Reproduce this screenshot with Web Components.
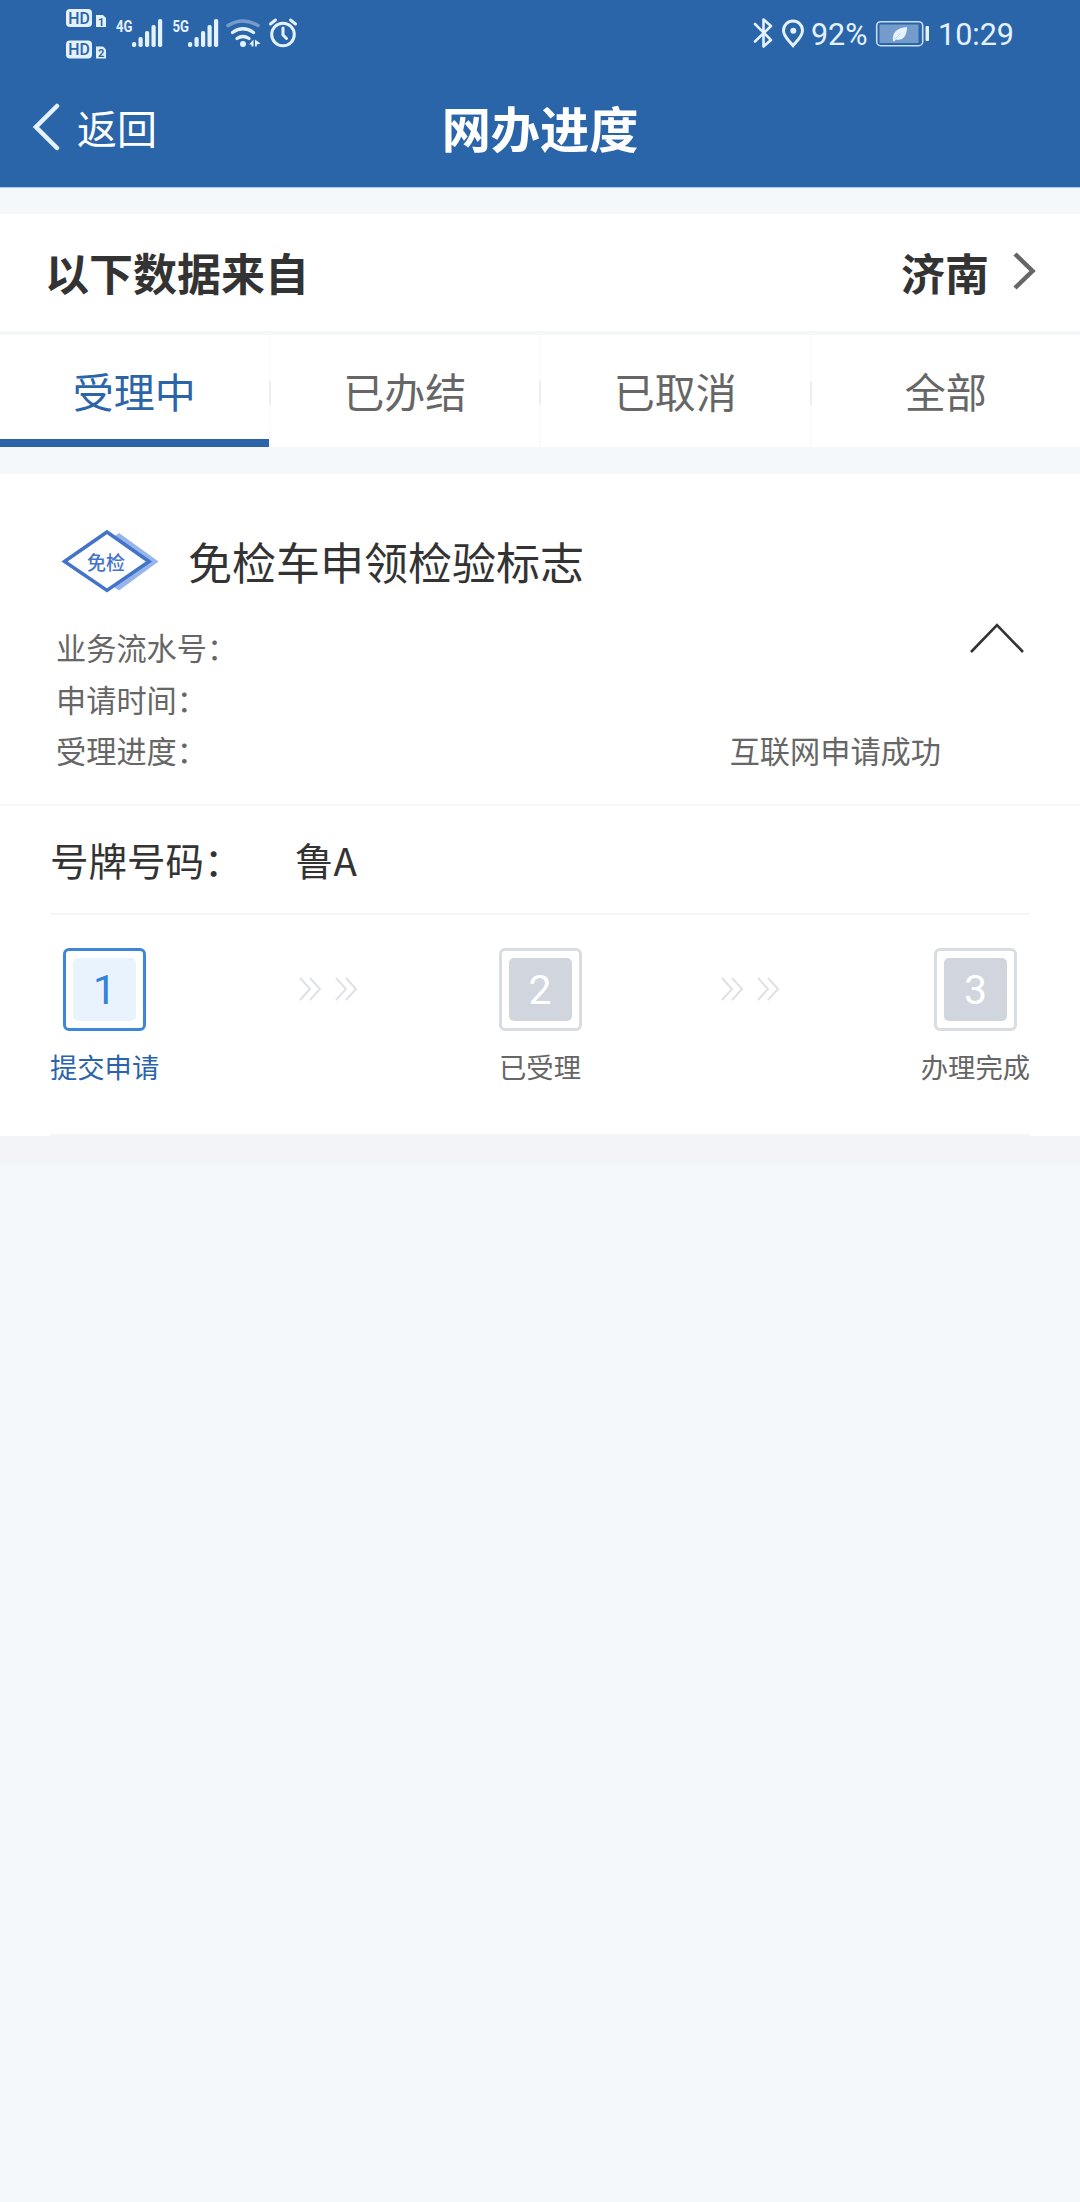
<!DOCTYPE html>
<html lang="zh-CN">
<head>
<meta charset="utf-8">
<title>网办进度</title>
<style>
	body {
		background: #f4f8fa;
		color: #333;
		font-family: "Noto Sans CJK SC", sans-serif;
		margin: 0;
	}
</style>
</head>
<body>
<progress-app></progress-app>
<script>
class BaseElement extends HTMLElement {
	constructor() {
		super();
		this.attachShadow({ mode: 'open' });
	}

	connectedCallback() {
		this.shadowRoot.innerHTML = `<style>${this.styles()}</style>${this.render()}`;
	}

	styles() { return ''; }
	render() { return '<slot></slot>'; }
}

// System status bar, icons on the left and right.

customElements.define('status-bar', class extends BaseElement {
	styles() {
		return `
			:host {
				color: #e4f1ff;
				display: flex;
				font: 32px/36px Roboto, sans-serif;
				height: 69px;
				justify-content: space-between;
				padding: 0 60px 0 65px;
			}
			div { display: flex; }
			.right { align-items: center; }
			svg { display: block; fill: none; stroke: currentColor; }
			text {
				fill: currentColor;
				font-family: Roboto, sans-serif;
				font-weight: 700;
				stroke: none;
			}
			.cut { fill: #2b65a9; }
			.solid { fill: currentColor; stroke: none; }
		`;
	}

	signal(x) {
		return [0, 1, 2, 3, 4].map((i) => {
			const h = [5, 10, 16, 22, 28][i];
			return `<rect class="solid" x="${x + i * 6.5}" y="${47 - h}" width="4.2" height="${h}" rx="1.8"/>`;
		}).join('');
	}

	hd(y, n) {
		return `
			<rect class="solid" x="66" y="${y}" width="26" height="18" rx="4"/>
			<text class="cut" x="68.2" y="${y + 14.6}" font-size="16" textLength="21.5" lengthAdjust="spacingAndGlyphs" style="font-weight:500">HD</text>
			<path class="solid" d="M96 ${y + 6}h7l3 3v9h-10z"/>
			<text class="cut" x="98" y="${y + 16.5}" font-size="11">${n}</text>
		`;
	}

	render() {
		return `
			<div>
				<svg width="235" height="69" viewBox="65 0 235 69">
					${this.hd(9, 1)}
					${this.hd(40.5, 2)}
					<text x="116" y="31.5" font-size="17" textLength="16.500" lengthAdjust="spacingAndGlyphs">4G</text>
					${this.signal(132)}
					<text x="172.500" y="31.5" font-size="17" textLength="16.500" lengthAdjust="spacingAndGlyphs">5G</text>
					${this.signal(188)}
					<path d="M228 25.500q15-9 30 0" stroke-width="3.500" stroke-linecap="round" opacity="0.4"/>
					<path d="M232.500 32.500q10.500-7.500 21 0M237 38.500q6-4 12 0" stroke-width="3.300" stroke-linecap="round"/>
					<circle class="solid" cx="243" cy="44" r="3"/>
					<path class="solid" d="M249 44.500l4.500-5v7h-2v-2zM255 39.500v7h1.800v-2l3.700-1z"/>
					<circle cx="283" cy="34.500" r="11.300" stroke-width="3"/>
					<path d="M283 28v7l3.500 3.500M270.500 24l5-4M295.500 24l-5-4" stroke-width="3" stroke-linecap="round"/>
				</svg>
			</div>
			<div class="right">
				<svg width="61" height="69" viewBox="750 0 61 69">
					<path d="M755 24l16 16-7.500 6.500v-27l7.500 6.500-16 15.500" stroke-width="2.600" stroke-linejoin="round" stroke-linecap="round"/>
					<path d="M793 45.500c-3-4-9.500-8.500-9.500-15a9.500 9.500 0 0 1 19 0c0 6.500-6.500 11-9.500 15z" stroke-width="3"/>
					<circle class="solid" cx="793.300" cy="30.700" r="3"/>
				</svg>
				<svg width="209" height="69" viewBox="811 0 209 69">
					<text x="811" y="45" font-size="32" textLength="56.500" lengthAdjust="spacingAndGlyphs" style="font-weight:400">92%</text>
					<rect x="876.700" y="21.700" width="46" height="24" rx="4" stroke-width="1.600" opacity="0.85"/>
					<rect class="solid" x="879.500" y="24.500" width="39" height="18.500" opacity="0.4"/>
					<rect class="solid" x="925.500" y="26" width="3.500" height="15" rx="1"/>
					<path class="solid" d="M893 41c-1-9 4-13 14-14 0 9-4 14-11 12.500l-2 2z"/>
					<path d="M895 39l6-6" style="stroke:#c3d6ec"/>
					<text x="938" y="45" font-size="32" textLength="76" lengthAdjust="spacingAndGlyphs" style="font-weight:400">10:29</text>
				</svg>
			</div>
		`;
	}
});

customElements.define('nav-bar', class extends BaseElement {
	styles() {
		return `
			:host {
				align-items: center;
				color: #fff;
				display: grid;
				grid-template-columns: 1fr auto 1fr;
				height: 115px;
				padding: 0 33px;
			}
			.back {
				align-items: center;
				display: flex;
				font-size: 40px;
				gap: 17px;
				line-height: 40px;
			}
			svg { display: block; fill: none; stroke: #e4f1ff; stroke-width: 4.500; }
			h1 {
				font-size: 49.200px;
				font-weight: 700;
				line-height: 114px;
				margin: 0;
			}
		`;
	}

	render() {
		return `
			<div class="back">
				<svg width="27" height="48" viewBox="0 0 27 48"><path d="M24 3L3 24l21 21" stroke-linecap="round"/></svg>
				<span>${this.getAttribute('back')}</span>
			</div>
			<h1><slot></slot></h1>
		`;
	}
});

customElements.define('source-row', class extends BaseElement {
	styles() {
		return `
			:host {
				align-items: center;
				background: #fff;
				border-bottom: 4px solid #f2f7f8;
				display: flex;
				font-size: 44px;
				font-weight: 700;
				height: 117px;
				justify-content: space-between;
				line-height: 117px;
				padding: 0 44px 0 45px;
			}
			div { align-items: center; display: flex; gap: 23px; }
			svg {
				display: block;
				fill: none;
				margin-bottom: 3px;
				stroke: #666;
				stroke-width: 4.5;
			}
		`;
	}

	render() {
		return `
			<slot></slot>
			<div>
				<span>${this.getAttribute('city')}</span>
				<svg width="24" height="40" viewBox="0 0 24 40"><path d="M3 3l17.500 17L3 37"/></svg>
			</div>
		`;
	}
});

customElements.define('tab-item', class extends BaseElement {
	styles() {
		return `
			:host {
				align-items: center;
				background: #fff;
				border-bottom: 8px solid #fff;
				color: #666;
				display: flex;
				flex: 1;
				font-size: 41px;
				height: 104px;
				line-height: 60px;
				margin-right: 2px;
			}
			:host([active]) { border-color: #2c64aa; color: #2c64aa; }
			:host(:last-child) { margin-right: 0; }
			span { flex: 1; padding-top: 6px; text-align: center; }
		`;
	}

	render() { return '<span><slot></slot></span>'; }
});

customElements.define('tab-bar', class extends BaseElement {
	styles() {
		return `
			:host {
				background: linear-gradient(#eceeef, #eceeef) 0 46px / 100% 24px no-repeat #f9fbfc;
				display: flex;
			}
		`;
	}
});

customElements.define('business-head', class extends BaseElement {
	styles() {
		return `
			:host {
				border-bottom: 2px solid #f7f8f9;
				box-sizing: border-box;
				display: block;
				height: 332px;
				padding: 0 55px 0 56px;
			}
			header {
				align-items: center;
				display: flex;
				gap: 29px;
				padding: 54px 0 0 5px;
			}
			h2 {
				font-size: 44px;
				font-weight: 400;
				line-height: 66px;
				margin: 0;
			}
			svg { display: block; fill: none; }
			text {
				fill: #4474c8;
				font-size: 19px;
				font-weight: 500;
			}
			.info { display: flex; justify-content: space-between; }
			dl {
				color: #666;
				display: grid;
				flex: 1;
				font-size: 30.200px;
				grid-auto-rows: 51.500px;
				grid-template-columns: 1fr auto;
				line-height: 51.500px;
				margin: 28px 0 0;
			}
			dt, dd { margin: 0; }
			.caret { margin: 28px 0 0 28px; }
		`;
	}

	render() {
		return `
			<header>
				<svg width="98" height="66" viewBox="61 528 98 66">
					<path d="M112 538l7-5L158.500 561.500 119 590.500l-7-5z" fill="#96b5ea"/>
					<path d="M124 543l28 18.500-28 19z" fill="#6c95dc"/>
					<path d="M64.500 561.500L107 532l42 29.500-42 29z" fill="#fff" stroke="#4474c8" stroke-width="3.500"/>
					<text x="87" y="569.500">免检</text>
				</svg>
				<h2>${this.getAttribute('heading')}</h2>
			</header>
			<div class="info">
				<dl>
					<dt>业务流水号：</dt><dd></dd>
					<dt>申请时间：</dt><dd></dd>
					<dt>受理进度：</dt><dd>${this.getAttribute('state')}</dd>
				</dl>
				<svg class="caret" width="56" height="32" viewBox="0 0 56 32"><path d="M2 30L28 3l26 27" stroke="#333" stroke-width="2.600"/></svg>
			</div>
		`;
	}
});

customElements.define('plate-row', class extends BaseElement {
	styles() {
		return `
			:host {
				border-bottom: 2px solid #f4f5f6;
				display: flex;
				font-size: 38.500px;
				height: 107px;
				line-height: 107px;
				margin: 0 50px;
			}
			span { width: 245px; }
		`;
	}

	render() { return `<span>${this.getAttribute('label')}</span><slot></slot>`; }
});

customElements.define('step-item', class extends BaseElement {
	styles() {
		return `
			:host {
				align-items: center;
				color: #666;
				display: flex;
				flex-direction: column;
				font-size: 27.300px;
				line-height: 40px;
			}
			.box {
				border: 3px solid #d9dce1;
				border-radius: 6px;
				box-sizing: border-box;
				height: 83px;
				margin-bottom: 15px;
				padding: 7px;
				width: 83px;
			}
			.num {
				background: #d1d5dd;
				border-radius: 5px;
				color: #fff;
				font: 41px/65px Roboto, sans-serif;
				height: 63px;
				text-align: center;
			}
			:host([active]) { color: #2c64aa; }
			:host([active]) .box { border-color: #3d86d8; }
			:host([active]) .num { background: #e9f3fd; color: #3482d9; }
		`;
	}

	render() {
		return `
			<div class="box"><div class="num">${this.getAttribute('num')}</div></div>
			<slot></slot>
		`;
	}
});

customElements.define('step-arrows', class extends BaseElement {
	styles() {
		return `
			:host { display: block; padding-top: 29px; }
			svg { display: block; fill: none; stroke: #dfe1e4; stroke-width: 2; }
		`;
	}

	render() {
		return `
			<svg width="60" height="24" viewBox="0 0 60 24">
				<path d="M1 1l10 11L1 23M11 1l10 11-10 11M37 1l10 11-10 11M47 1l10 11-10 11"/>
			</svg>
		`;
	}
});

customElements.define('step-list', class extends BaseElement {
	styles() {
		return `
			:host {
				align-items: flex-start;
				border-bottom: 2px solid #f4f5f8;
				display: flex;
				height: 186px;
				justify-content: space-between;
				margin: 0 50px;
				padding-top: 33px;
			}
		`;
	}
});

customElements.define('progress-app', class extends BaseElement {
	styles() {
		return `
			:host { display: block; min-height: 2202px; }
			.top {
				background: #2b65a9;
				border-bottom: 1px solid #a9c9e8;
				box-sizing: border-box;
				height: 188px;
				margin-bottom: 26px;
			}
			.card {
				background: #fff;
				box-shadow: 0 28px #f3f4f8;
				margin-top: 27px;
			}
		`;
	}

	render() {
		return `
			<div class="top">
				<status-bar></status-bar>
				<nav-bar back="返回">网办进度</nav-bar>
			</div>
			<source-row city="济南">以下数据来自</source-row>
			<tab-bar>
				<tab-item active>受理中</tab-item>
				<tab-item>已办结</tab-item>
				<tab-item>已取消</tab-item>
				<tab-item>全部</tab-item>
			</tab-bar>
			<div class="card">
				<business-head heading="免检车申领检验标志" state="互联网申请成功"></business-head>
				<plate-row label="号牌号码：">鲁A</plate-row>
				<step-list>
					<step-item num="1" active>提交申请</step-item>
					<step-arrows></step-arrows>
					<step-item num="2">已受理</step-item>
					<step-arrows></step-arrows>
					<step-item num="3">办理完成</step-item>
				</step-list>
			</div>
		`;
	}
});
</script>
</body>
</html>
